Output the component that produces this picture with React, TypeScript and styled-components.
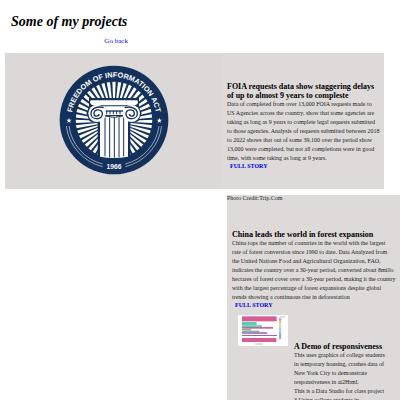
import React from "react";
import styled, { createGlobalStyle } from "styled-components";

const GlobalStyle = createGlobalStyle`
  *, *::before, *::after { box-sizing: border-box; }
  body {
    margin: 0;
    background: #fff;
    color: #000;
    font-family: "Liberation Serif", "Times New Roman", serif;
  }
`;

const Page = styled.div`
  height: 100vh;
  overflow: hidden;
  padding: 14px 0 0 5px;
`;

const Header = styled.header`
  padding-left: 6px;
`;

const Title = styled.h1`
  margin: 0;
  font-size: 14px;
  line-height: 16px;
  font-style: italic;
`;

const BackLink = styled.a`
  display: block;
  width: fit-content;
  margin: 7px 0 7px 24%;
  font-size: 7px;
  line-height: 9px;
  color: #0000d8;
  text-decoration: none;
`;

const FeatureCard = styled.article`
  display: grid;
  grid-template-columns: 217fr 162fr;
  margin-right: 16px;
  background: #dddad9;
`;

const FeatureFigure = styled.div`
  display: flex;
  justify-content: center;
  align-items: flex-start;
  padding-top: 12px;
  background: #dbd8d7;
`;

const Story = styled.div<{ $padding: string }>`
  padding: ${(p) => p.$padding};
`;

const StoryTitle = styled.h2`
  margin: 0;
  font-size: 8px;
  line-height: 9px;
  white-space: pre-line;
`;

const StoryText = styled.p`
  margin: 0;
  font-size: 6px;
  line-height: 9px;
  color: #1c1c1c;
  white-space: pre-line;
`;

const StoryLink = styled.a`
  display: block;
  width: fit-content;
  margin-left: 3px;
  font-size: 6px;
  line-height: 7px;
  font-weight: bold;
  color: #0000e0;
  text-decoration: none;
`;

const SideColumn = styled.section`
  margin: 6px 0 0 56.2%;
  min-height: 100vh;
  background: #dddad9;
`;

const Credit = styled.p`
  margin: 0;
  font-size: 6px;
  line-height: 7px;
  color: #1c1c1c;
`;

const DemoRow = styled.article`
  display: grid;
  grid-template-columns: 50px 1fr;
  column-gap: 6px;
  padding: 6px 8px 0 11px;
`;

const NAVY = "#14315b";
const RAYS = Array.from({ length: 44 }, (_, i) => (i * 360) / 44);

function wedge(deg: number) {
  const point = (d: number) => {
    const a = (d * Math.PI) / 180;
    return `${175 + 170 * Math.cos(a)},${184 + 170 * Math.sin(a)}`;
  };
  return `175,184 ${point(deg - 2.4)} ${point(deg + 2.4)}`;
}

function Seal() {
  return (
    <svg width="110" height="110" viewBox="10 15 330 330" role="img" aria-label="Freedom of Information Act seal">
      <defs>
        <clipPath id="burst">
          <circle cx="175" cy="180" r="115" />
        </clipPath>
        <path id="motto" d="M 47 180 A 128 128 0 0 1 303 180" />
      </defs>
      <circle cx="175" cy="180" r="163" fill={NAVY} />
      <g clipPath="url(#burst)" fill="#fff">
        {RAYS.map((deg) => (
          <polygon key={deg} points={wedge(deg)} />
        ))}
      </g>
      <path d="M100 114H250V140L258 160L248 184L224 190V310H126V190L102 184L92 160L100 140Z" fill={NAVY} />
      <path d="M105 121H245Q251 132 238 136H112Q99 132 105 121Z" fill="#fff" />
      <path d="M122 139H228V165H122Z" fill="#fff" />
      <path d="M150 151H202V155H150Z" fill={NAVY} />
      <path d="M153 153V163M163 153V163M173 153V163M183 153V163M193 153V163" stroke={NAVY} strokeWidth="3" />
      <path d="M133 168H217V290Q175 298 133 290Z" fill="#fff" />
      <path d="M148 172V289M162 172V292M176 172V293M190 172V292M204 172V289" stroke={NAVY} strokeWidth="3" />
      <path d="M148 168Q175 176 202 168" stroke={NAVY} strokeWidth="3" fill="none" />
      {[
        { x: 124, side: 1 },
        { x: 227, side: -1 },
      ].map(({ x, side }) => (
        <g key={x} transform={`translate(${x} 160) scale(${side} 1)`} fill="none">
          <circle r="26" fill="#fff" />
          <path
            d="M20-17C4-22-18-17-18 1C-18 20 14 22 16 2C17-13-8-15-9 1C-9 11 6 10 6 2"
            stroke={NAVY}
            strokeWidth="4"
          />
        </g>
      ))}
      <g fill="none" stroke="#aebacb" strokeWidth="2.5">
        <path d="M32 198A144 144 0 0 0 141 320" />
        <path d="M40 198A136 136 0 0 0 141 312" />
        <path d="M318 198A144 144 0 0 1 209 320" />
        <path d="M310 198A136 136 0 0 1 209 312" />
      </g>
      {[40, 311].map((x) => (
        <path
          key={x}
          transform={`translate(${x} 181)`}
          d="M0-8L2-2H8L3 2L5 8L0 4L-5 8L-3 2L-8-2H-2Z"
          fill="#fff"
        />
      ))}
      <g fill="#fff" fontFamily="'Liberation Sans', Arial, sans-serif" fontWeight="bold">
        <text fontSize="22" textAnchor="middle">
          <textPath href="#motto" startOffset="50%">FREEDOM OF INFORMATION ACT</textPath>
        </text>
        <text x="175" y="326" fontSize="20" textAnchor="middle">1966</text>
      </g>
    </svg>
  );
}

const BARS = [
  { y: 4, h: 15, w: 104, fill: "#d85c96" },
  { y: 21, h: 10, w: 44, fill: "#5bcdb0" },
  { y: 31, h: 5, w: 60, fill: "#5bcdb0" },
  { y: 36, h: 5, w: 93, fill: "#d15fa5" },
  { y: 42, h: 4, w: 28, fill: "#8fa882" },
  { y: 47, h: 4, w: 52, fill: "#78b58c" },
  { y: 52, h: 4, w: 76, fill: "#7c52ac" },
  { y: 60, h: 3, w: 105, fill: "#ab5fbd" },
  { y: 69, h: 12, w: 103, fill: "#d85c96" },
];
const LEGEND = ["#c84c84", "#d89354", "#e0c45a", "#a8cd62", "#61c87b", "#58c6c5", "#5a91d2", "#755fcb", "#b95cbd"];

function BarChart() {
  return (
    <svg width="50" height="31" viewBox="0 0 150 93" role="img" aria-label="Bar chart">
      <rect width="150" height="93" fill="#fff" />
      {BARS.map((b) => (
        <rect key={b.y} x="12" y={b.y} width={b.w} height={b.h} fill={b.fill} />
      ))}
      {LEGEND.map((fill, i) => (
        <rect key={fill} x="124" y={10 + i * 7} width="4" height="7" fill={fill} />
      ))}
      <path d="M124 6H142M52 87H73" stroke="#999" strokeWidth="2" />
      <path d="M131 12V72" stroke="#ccc" strokeWidth="2" strokeDasharray="3 4" />
    </svg>
  );
}

export default function App() {
  return (
    <>
      <GlobalStyle />
      <Page>
        <Header>
          <Title>Some of my projects</Title>
          <BackLink href="#">Go back</BackLink>
        </Header>
        <main>
          <FeatureCard>
            <FeatureFigure>
              <Seal />
            </FeatureFigure>
            <Story $padding="29px 0 19px 5px">
              <StoryTitle>
                {`FOIA requests data show staggering delays
                of up to almost 9 years to compleste`}
              </StoryTitle>
              <StoryText>
                {`Data of completed from over 13,000 FOIA requests made to
                US Agencies across the country, show that some agencies are
                taking as long as 9 years to complete legal requests submitted
                to those agencies. Analysis of requests submitted between 2018
                to 2022 shows that out of some 39,100 over the period show
                13,000 were completed, but not all completions were in good
                time, with some taking as long at 9 years.`}
              </StoryText>
              <StoryLink href="#">FULL STORY</StoryLink>
            </Story>
          </FeatureCard>
          <SideColumn>
            <Credit>Photo Credit:Trip.Com</Credit>
            <Story as="article" $padding="28px 0 0 5px">
              <StoryTitle>China leads the world in forest expansion</StoryTitle>
              <StoryText>
                {`China tops the number of countries in the world with the largest
                rate of forest conversion since 1990 to date. Data Analyzed from
                the United Nations Food and Agricultural Organization, FAO,
                indicates the country over a 30-year period, converted about 8millo
                hectares of forest cover over a 30-year period, making it the country
                with the largest percentage of forest expansions despite global
                trends showing a continuous rise in deforestation`}
              </StoryText>
              <StoryLink href="#">FULL STORY</StoryLink>
            </Story>
            <DemoRow>
              <BarChart />
              <Story $padding="27px 0 0">
                <StoryTitle>A Demo of responsiveness</StoryTitle>
                <StoryText>
                  {`This uses graphics of college students
                  in temporary housing, crashes data of
                  New York City to demonstrate
                  responsiveness in ai2Html.
                  This is a Data Studio for class project
                  3 Using college students in`}
                </StoryText>
              </Story>
            </DemoRow>
          </SideColumn>
        </main>
      </Page>
    </>
  );
}
